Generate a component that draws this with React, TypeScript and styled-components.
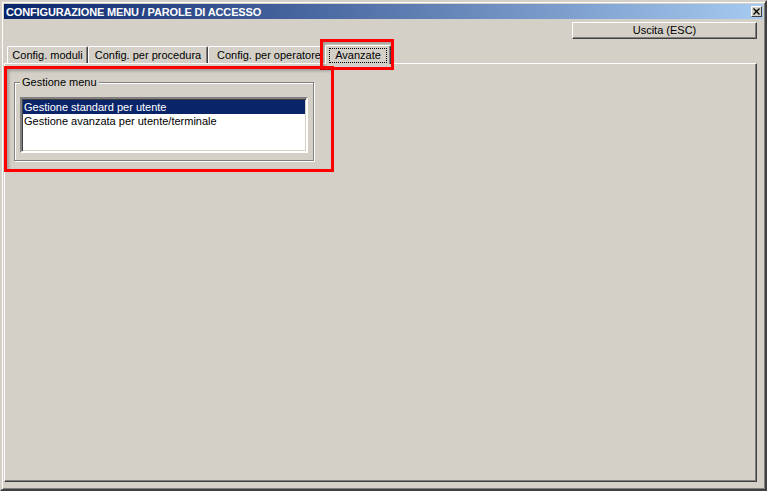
import React from "react";
import styled, { createGlobalStyle, css } from "styled-components";

const face = "#d4d0c8";
const hi = "#ffffff";
const shadow = "#808080";
const dark = "#404040";

const Global = createGlobalStyle`
  html, body { margin: 0; padding: 0; background: ${face}; }
  body { font-family: "Liberation Sans", Arial, sans-serif; font-size: 11px; color: #000; }
  * { box-sizing: border-box; }
`;

const Window = styled.div`
  position: relative;
  width: 767px;
  height: 491px;
  background: ${face};
  border: 2px solid;
  border-color: ${face} ${dark} ${dark} ${face};
  box-shadow: inset 1px 1px 0 ${hi}, inset -1px -1px 0 ${shadow};
  padding: 2px;
  display: flex;
  flex-direction: column;
`;

const TitleBar = styled.div`
  height: 15px;
  background: linear-gradient(to right, #0a246a, #a6caf0);
  display: flex;
  align-items: center;
  justify-content: space-between;
  padding: 0 1px 0 2px;
`;

const Title = styled.span`
  color: #fff;
  font-weight: bold;
  font-size: 11px;
  letter-spacing: -0.15px;
  white-space: nowrap;
`;

const CloseButton = styled.div`
  width: 11px;
  height: 11px;
  background: ${face};
  border: 1px solid;
  border-color: ${hi} ${dark} ${dark} ${hi};
  display: flex;
  align-items: center;
  justify-content: center;
`;

const Toolbar = styled.div`
  display: flex;
  justify-content: flex-end;
  margin-top: 3px;
  padding-right: 6px;
`;

const Button = styled.div`
  width: 185px;
  height: 17px;
  border: 1px solid;
  border-color: ${hi} ${dark} ${dark} ${hi};
  box-shadow: inset -1px -1px 0 ${shadow};
  display: flex;
  align-items: center;
  justify-content: center;
  line-height: 13px;
`;

const TabStrip = styled.div`
  display: flex;
  align-items: flex-end;
  margin-top: 7px;
  padding-left: 3px;
  height: 17px;
`;

const Tab = styled.div<{ $w: number; $active?: boolean; $pl?: number }>`
  width: ${(p) => p.$w}px;
  height: 17px;
  border-top: 1px solid ${hi};
  border-left: 1px solid ${hi};
  border-right: 1px solid ${dark};
  border-top-left-radius: 2px;
  border-top-right-radius: 2px;
  box-shadow: inset -1px 0 0 ${shadow};
  background: ${face};
  display: flex;
  align-items: center;
  justify-content: ${(p) => (p.$pl ? "flex-start" : "center")};
  padding-left: ${(p) => p.$pl ?? 0}px;
  white-space: nowrap;
  overflow: hidden;
  line-height: 13px;
  ${(p) =>
    p.$active &&
    css`
      position: relative;
      z-index: 1;
      height: 19px;
      margin-bottom: -1px;
      margin-left: 2px;
      padding: 2px 3px 0 3px;
      align-items: stretch;
    `}
`;

const Focus = styled.div`
  flex: 1;
  border: 1px dotted #000;
  display: flex;
  align-items: center;
  justify-content: center;
  margin-bottom: 1px;
`;

const Panel = styled.div`
  flex: 1;
  width: 753px;
  margin-bottom: 5px;
  border: 1px solid;
  border-color: ${hi} ${dark} ${dark} ${hi};
  box-shadow: inset -1px -1px 0 ${shadow};
  padding: 12px 0 0 9px;
`;

const GroupBox = styled.fieldset`
  margin: 0;
  width: 300px;
  padding: 0 5px 7px 5px;
  border: 1px solid ${shadow};
  box-shadow: inset 1px 1px 0 ${hi}, 1px 1px 0 ${hi};
`;

const Legend = styled.legend`
  margin-left: 0;
  padding: 0 2px;
  line-height: 13px;
  background: ${face};
`;

const ListBox = styled.div`
  margin-top: 8px;
  height: 56px;
  background: #fff;
  border: 2px solid;
  border-color: ${shadow} ${hi} ${hi} ${shadow};
  box-shadow: inset 1px 1px 0 ${dark}, inset -1px -1px 0 ${face};
  padding: 1px 1px;
`;

const Item = styled.div<{ $sel?: boolean }>`
  height: 14px;
  line-height: 14px;
  padding-left: 1px;
  white-space: nowrap;
  background: ${(p) => (p.$sel ? "#0a246a" : "transparent")};
  color: ${(p) => (p.$sel ? "#fff" : "#000")};
`;

const Mark = styled.div`
  position: absolute;
  border: 3px solid #ff0000;
  pointer-events: none;
  box-shadow: inset 2px 2px 3px rgba(0, 0, 0, 0.25);
`;

export default function App() {
  return (
    <>
      <Global />
      <Window>
        <TitleBar>
          <Title>CONFIGURAZIONE MENU / PAROLE DI ACCESSO</Title>
          <CloseButton>
            <svg width="7" height="7" viewBox="0 0 7 7">
              <path d="M0.5 0.5 L6.5 6.5 M6.5 0.5 L0.5 6.5" stroke="#000" strokeWidth="1.4" />
            </svg>
          </CloseButton>
        </TitleBar>
        <Toolbar>
          <Button>Uscita (ESC)</Button>
        </Toolbar>
        <TabStrip>
          <Tab $w={81}>Config. moduli</Tab>
          <Tab $w={120}>Config. per procedura</Tab>
          <Tab $w={115} $pl={8}>Config. per operatore</Tab>
          <Tab $w={66} $active>
            <Focus>Avanzate</Focus>
          </Tab>
        </TabStrip>
        <Panel>
          <GroupBox>
            <Legend>Gestione menu</Legend>
            <ListBox>
              <Item $sel>Gestione standard per utente</Item>
              <Item>Gestione avanzata per utente/terminale</Item>
            </ListBox>
          </GroupBox>
        </Panel>
        <Mark style={{ left: 318, top: 37, width: 74, height: 31 }} />
        <Mark style={{ left: 2, top: 64, width: 330, height: 106 }} />
      </Window>
    </>
  );
}
